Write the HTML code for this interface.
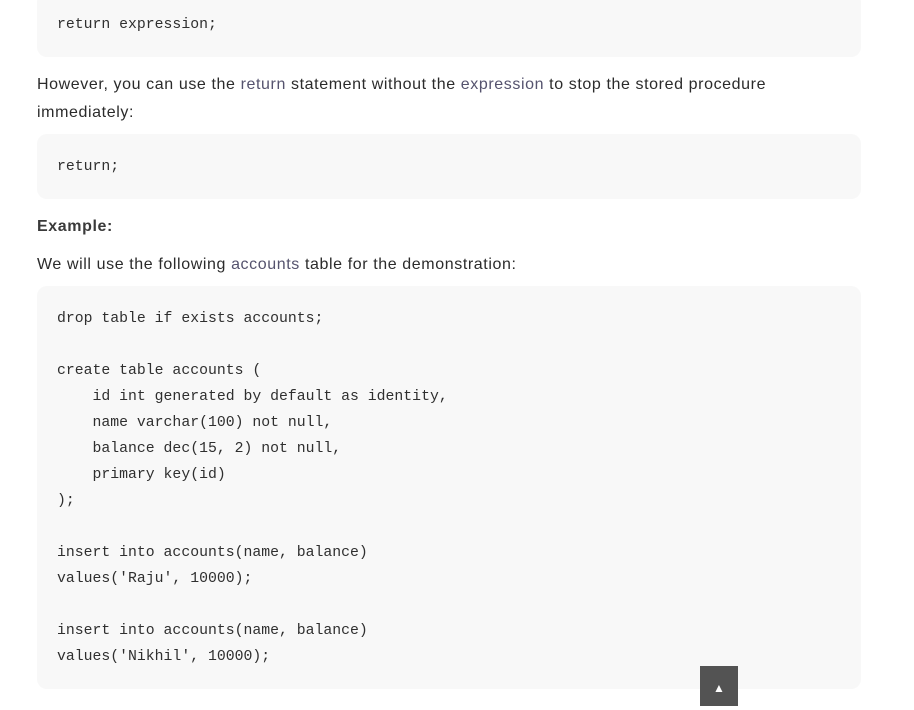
<!DOCTYPE html>
<html><head><meta charset="utf-8"><style>
body{margin:0;background:#fff;width:914px;height:697px;overflow:hidden;position:relative;font-family:"Liberation Sans",sans-serif;color:#2b2b2b}
.code{position:absolute;left:37px;width:824px;background:#f8f8f8;border-radius:10px;box-sizing:border-box;padding:20px 20px 19px 20px;font-family:"Liberation Mono",monospace;font-size:14.8px;line-height:26px;color:#2f2f2f;white-space:pre;margin:0}
.p{position:absolute;left:37px;font-size:16px;line-height:28px;width:740px;letter-spacing:0.6px}
.c{color:#55536e}
.btn{position:absolute;left:700px;top:666px;width:38px;height:40px;background:#535353;color:#fff;font-size:12px;text-align:center;line-height:44px}
</style></head><body>
<pre class="code" style="top:-8px">return expression;</pre>
<div class="p" style="top:71px">However, you can use the <span class="c">return</span> statement without the <span class="c">expression</span> to stop the stored procedure immediately:</div>
<pre class="code" style="top:134px">return;</pre>
<div class="p" style="top:213px;font-weight:bold;color:#3a3a3a">Example:</div>
<div class="p" style="top:251px">We will use the following <span class="c">accounts</span> table for the demonstration:</div>
<pre class="code" style="top:286px">drop table if exists accounts;

create table accounts (
    id int generated by default as identity,
    name varchar(100) not null,
    balance dec(15, 2) not null,
    primary key(id)
);

insert into accounts(name, balance)
values('Raju', 10000);

insert into accounts(name, balance)
values('Nikhil', 10000);</pre>
<div class="btn">▲</div>
</body></html>
